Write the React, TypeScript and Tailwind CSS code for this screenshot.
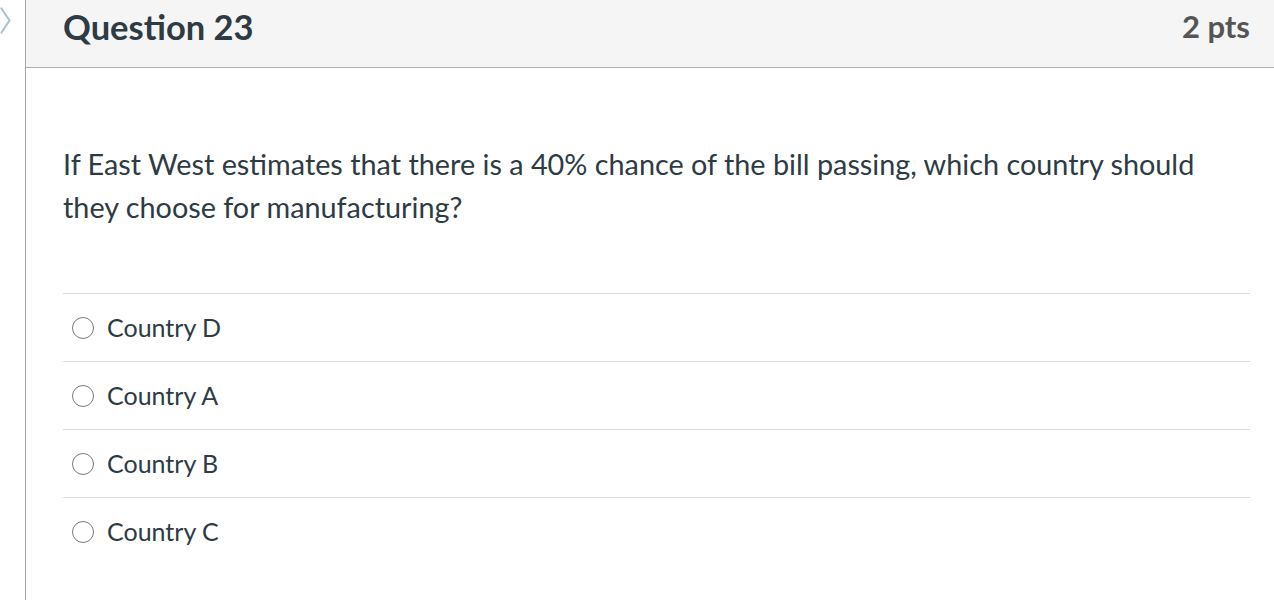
import React from 'react';

const answers = ['Country D', 'Country A', 'Country B', 'Country C'];

const App: React.FC = () => {
  return (
    <div className="flex h-[600px] w-[1274px] overflow-hidden bg-white font-['Lato','Liberation_Sans',sans-serif] text-[#2d3b45]">
      <div className="w-[25px] shrink-0 pt-[7px]">
        <svg width="12" height="27" viewBox="0 0 12 27" fill="none">
          <path d="M1.5 1.5 L9.5 13.5 L1.5 25.5" stroke="#aec2d6" strokeWidth="2.2" strokeLinecap="round" strokeLinejoin="round" />
        </svg>
      </div>
      <div className="flex-1 border-l border-[#a6a6a6]">
        <header className="flex h-[68px] items-start justify-between border-b border-[#b0b0b0] bg-[#f5f5f5] pl-[37px] pr-[24px] pt-[6px]">
          <h1 className="text-[34.5px] leading-[41px] font-bold">Question 23</h1>
          <span className="text-[31px] leading-[41px] font-bold text-[#555]">2 pts</span>
        </header>
        <div className="pl-[37px] pr-[24px]">
          <p className="max-w-[1175px] pt-[75px] pb-[64px] text-[28.8px] leading-[43px]">
            If East West estimates that there is a 40% chance of the bill passing, which country should they choose for manufacturing?
          </p>
          <div>
            {answers.map((a) => (
              <label key={a} className="flex h-[68px] items-center gap-[13px] border-t border-[#dcdcdc] pl-[9px]">
                <span className="h-[22px] w-[22px] rounded-full border-[1.5px] border-[#7a7a7a] bg-white" />
                <span className="text-[25px]">{a}</span>
              </label>
            ))}
          </div>
        </div>
      </div>
    </div>
  );
};

export default App;
